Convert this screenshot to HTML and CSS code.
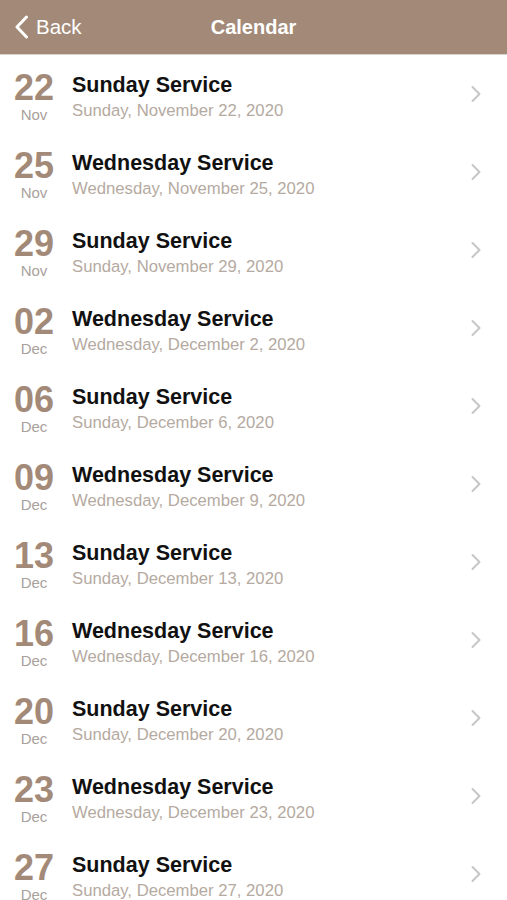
FILE: index.html
```html
<!DOCTYPE html>
<html lang="en">
<head>
    <meta charset="UTF-8">
    <meta name="viewport" content="width=device-width, initial-scale=1.0">
    <title>Calendar</title>
    <link rel="stylesheet" href="styles.css">
</head>
<body>
    <div class="navbar">
        <a class="back" href="#">
            <svg class="back-icon" width="15" height="24" viewBox="0 0 15 24"><path d="M12.5 2 L3 12 L12.5 22" fill="none" stroke="#fff" stroke-width="3" stroke-linecap="round" stroke-linejoin="round"/></svg>
            <span>Back</span>
        </a>
        <div class="title">Calendar</div>
    </div>

    <ul class="events">
        <li class="event">
            <div class="date"><div class="day">22</div><div class="month">Nov</div></div>
            <div class="info"><div class="name">Sunday Service</div><div class="when">Sunday, November 22, 2020</div></div>
            <svg class="chevron" width="12" height="18" viewBox="0 0 12 18"><path d="M2.5 2 L9.5 9 L2.5 16" fill="none" stroke="#c6c6c8" stroke-width="2" stroke-linecap="round" stroke-linejoin="round"/></svg>
        </li>
        <li class="event">
            <div class="date"><div class="day">25</div><div class="month">Nov</div></div>
            <div class="info"><div class="name">Wednesday Service</div><div class="when">Wednesday, November 25, 2020</div></div>
            <svg class="chevron" width="12" height="18" viewBox="0 0 12 18"><path d="M2.5 2 L9.5 9 L2.5 16" fill="none" stroke="#c6c6c8" stroke-width="2" stroke-linecap="round" stroke-linejoin="round"/></svg>
        </li>
        <li class="event">
            <div class="date"><div class="day">29</div><div class="month">Nov</div></div>
            <div class="info"><div class="name">Sunday Service</div><div class="when">Sunday, November 29, 2020</div></div>
            <svg class="chevron" width="12" height="18" viewBox="0 0 12 18"><path d="M2.5 2 L9.5 9 L2.5 16" fill="none" stroke="#c6c6c8" stroke-width="2" stroke-linecap="round" stroke-linejoin="round"/></svg>
        </li>
        <li class="event">
            <div class="date"><div class="day">02</div><div class="month">Dec</div></div>
            <div class="info"><div class="name">Wednesday Service</div><div class="when">Wednesday, December 2, 2020</div></div>
            <svg class="chevron" width="12" height="18" viewBox="0 0 12 18"><path d="M2.5 2 L9.5 9 L2.5 16" fill="none" stroke="#c6c6c8" stroke-width="2" stroke-linecap="round" stroke-linejoin="round"/></svg>
        </li>
        <li class="event">
            <div class="date"><div class="day">06</div><div class="month">Dec</div></div>
            <div class="info"><div class="name">Sunday Service</div><div class="when">Sunday, December 6, 2020</div></div>
            <svg class="chevron" width="12" height="18" viewBox="0 0 12 18"><path d="M2.5 2 L9.5 9 L2.5 16" fill="none" stroke="#c6c6c8" stroke-width="2" stroke-linecap="round" stroke-linejoin="round"/></svg>
        </li>
        <li class="event">
            <div class="date"><div class="day">09</div><div class="month">Dec</div></div>
            <div class="info"><div class="name">Wednesday Service</div><div class="when">Wednesday, December 9, 2020</div></div>
            <svg class="chevron" width="12" height="18" viewBox="0 0 12 18"><path d="M2.5 2 L9.5 9 L2.5 16" fill="none" stroke="#c6c6c8" stroke-width="2" stroke-linecap="round" stroke-linejoin="round"/></svg>
        </li>
        <li class="event">
            <div class="date"><div class="day">13</div><div class="month">Dec</div></div>
            <div class="info"><div class="name">Sunday Service</div><div class="when">Sunday, December 13, 2020</div></div>
            <svg class="chevron" width="12" height="18" viewBox="0 0 12 18"><path d="M2.5 2 L9.5 9 L2.5 16" fill="none" stroke="#c6c6c8" stroke-width="2" stroke-linecap="round" stroke-linejoin="round"/></svg>
        </li>
        <li class="event">
            <div class="date"><div class="day">16</div><div class="month">Dec</div></div>
            <div class="info"><div class="name">Wednesday Service</div><div class="when">Wednesday, December 16, 2020</div></div>
            <svg class="chevron" width="12" height="18" viewBox="0 0 12 18"><path d="M2.5 2 L9.5 9 L2.5 16" fill="none" stroke="#c6c6c8" stroke-width="2" stroke-linecap="round" stroke-linejoin="round"/></svg>
        </li>
        <li class="event">
            <div class="date"><div class="day">20</div><div class="month">Dec</div></div>
            <div class="info"><div class="name">Sunday Service</div><div class="when">Sunday, December 20, 2020</div></div>
            <svg class="chevron" width="12" height="18" viewBox="0 0 12 18"><path d="M2.5 2 L9.5 9 L2.5 16" fill="none" stroke="#c6c6c8" stroke-width="2" stroke-linecap="round" stroke-linejoin="round"/></svg>
        </li>
        <li class="event">
            <div class="date"><div class="day">23</div><div class="month">Dec</div></div>
            <div class="info"><div class="name">Wednesday Service</div><div class="when">Wednesday, December 23, 2020</div></div>
            <svg class="chevron" width="12" height="18" viewBox="0 0 12 18"><path d="M2.5 2 L9.5 9 L2.5 16" fill="none" stroke="#c6c6c8" stroke-width="2" stroke-linecap="round" stroke-linejoin="round"/></svg>
        </li>
        <li class="event">
            <div class="date"><div class="day">27</div><div class="month">Dec</div></div>
            <div class="info"><div class="name">Sunday Service</div><div class="when">Sunday, December 27, 2020</div></div>
            <svg class="chevron" width="12" height="18" viewBox="0 0 12 18"><path d="M2.5 2 L9.5 9 L2.5 16" fill="none" stroke="#c6c6c8" stroke-width="2" stroke-linecap="round" stroke-linejoin="round"/></svg>
        </li>
    </ul>
</body>
</html>
```

FILE: styles.css
```css
body {
    font-family: "Liberation Sans", Arial, sans-serif;
    background-color: #fff;
    margin: 0;
    padding: 0;
    height: 900px;
    overflow: hidden;
}

.navbar {
    position: relative;
    height: 54px;
    background-color: #a38a78;
    border-bottom: 1px solid #d8d2cd;
    display: flex;
    align-items: center;
    justify-content: center;
}

.back {
    position: absolute;
    left: 14px;
    top: 0;
    height: 54px;
    display: flex;
    align-items: center;
    gap: 7px;
    color: #fff;
    text-decoration: none;
    font-size: 20.5px;
}

.title {
    color: #fff;
    font-size: 20px;
    font-weight: bold;
}

.events {
    list-style: none;
    margin: 0;
    padding: 0;
}

.event {
    height: 78px;
    display: flex;
    align-items: flex-start;
    padding-top: 16px;
    box-sizing: border-box;
}

.date {
    width: 56px;
    margin-left: 6px;
    margin-top: -1px;
    text-align: center;
}

.day {
    color: #a38a78;
    font-size: 36px;
    font-weight: bold;
    line-height: 36px;
}

.month {
    color: #a8a19c;
    font-size: 15px;
    line-height: 18px;
}

.info {
    flex: 1;
    margin-left: 10px;
}

.name {
    color: #111;
    font-size: 21.5px;
    font-weight: bold;
    line-height: 24px;
    margin-top: 2px;
}

.when {
    color: #b5aaa1;
    font-size: 16.7px;
    line-height: 20px;
    margin-top: 4px;
}

.chevron {
    margin-top: 14px;
    margin-right: 25px;
}
```
